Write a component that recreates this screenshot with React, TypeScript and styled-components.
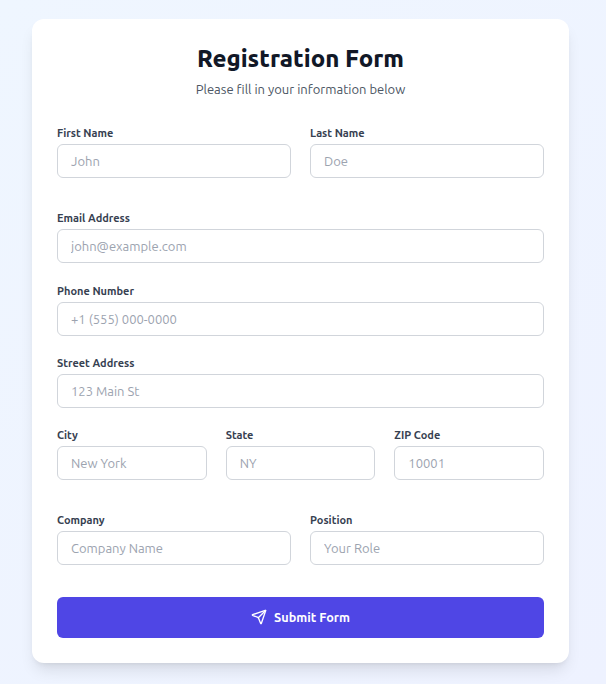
import React from "react";
import styled, { createGlobalStyle } from "styled-components";
import { Send } from "lucide-react";

const Global = createGlobalStyle`
  * { box-sizing: border-box; }
  html, body { margin: 0; padding: 0; }
  body { font-family: Ubuntu, sans-serif; }
`;

const Page = styled.div`
  min-height: 684px;
  padding: 19px 37px 21px 32px;
  background: linear-gradient(135deg, #eff6ff, #eef2ff);
`;

const Card = styled.form`
  background: #fff;
  border-radius: 12px;
  padding: 25px;
  box-shadow: 0 10px 15px -3px rgba(0, 0, 0, 0.1), 0 4px 6px -4px rgba(0, 0, 0, 0.1);
`;

const Header = styled.header`
  text-align: center;
  margin-bottom: 25.2px;
`;

const Title = styled.h1`
  margin: 0;
  font-size: 24px;
  line-height: 30px;
  font-weight: 800;
  color: #111827;
`;

const Subtitle = styled.p`
  margin: 5px 0 0;
  font-size: 13px;
  line-height: 20px;
  color: #4b5563;
`;

const Fields = styled.div`
  display: flex;
  flex-direction: column;
  gap: 18.2px;
`;

const Row = styled.div<{ $cols: number; $gap: number; $spaced?: boolean }>`
  display: grid;
  grid-template-columns: repeat(${(p) => p.$cols}, minmax(0, 1fr));
  gap: ${(p) => p.$gap}px;
  margin-bottom: ${(p) => (p.$spaced ? 13 : 0)}px;
`;

const Group = styled.div`
  display: flex;
  flex-direction: column;
`;

const Label = styled.label`
  display: block;
  font-size: 11px;
  line-height: 18px;
  font-weight: 600;
  color: #374151;
  margin-bottom: 2px;
`;

const Input = styled.input`
  width: 100%;
  height: 34px;
  padding: 0 13px;
  border: 1px solid #d1d5db;
  border-radius: 6px;
  background: #fff;
  font-family: inherit;
  font-size: 13px;
  color: #111827;
  outline: none;
  &::placeholder { color: #9ca3af; opacity: 1; }
`;

const Submit = styled.button`
  display: flex;
  align-items: center;
  justify-content: center;
  gap: 7px;
  width: 100%;
  height: 41px;
  margin-top: 13.6px;
  border: 0;
  border-radius: 6px;
  background: #4f46e5;
  color: #fff;
  font-family: inherit;
  font-size: 12.7px;
  font-weight: 600;
`;

const Field = ({ label, placeholder, type = "text" }: { label: string; placeholder: string; type?: string }) => (
  <Group>
    <Label>{label}</Label>
    <Input type={type} placeholder={placeholder} />
  </Group>
);

export default function App() {
  return (
    <>
      <Global />
      <Page>
        <Card onSubmit={(e) => e.preventDefault()}>
          <Header>
            <Title>Registration Form</Title>
            <Subtitle>Please fill in your information below</Subtitle>
          </Header>
          <Fields>
            <Row $cols={2} $gap={19} $spaced>
              <Field label="First Name" placeholder="John" />
              <Field label="Last Name" placeholder="Doe" />
            </Row>
            <Field label="Email Address" placeholder="john@example.com" type="email" />
            <Field label="Phone Number" placeholder="+1 (555) 000-0000" type="tel" />
            <Field label="Street Address" placeholder="123 Main St" />
            <Row $cols={3} $gap={19} $spaced>
              <Field label="City" placeholder="New York" />
              <Field label="State" placeholder="NY" />
              <Field label="ZIP Code" placeholder="10001" />
            </Row>
            <Row $cols={2} $gap={19}>
              <Field label="Company" placeholder="Company Name" />
              <Field label="Position" placeholder="Your Role" />
            </Row>
            <Submit type="submit">
              <Send size={16} />
              Submit Form
            </Submit>
          </Fields>
        </Card>
      </Page>
    </>
  );
}
